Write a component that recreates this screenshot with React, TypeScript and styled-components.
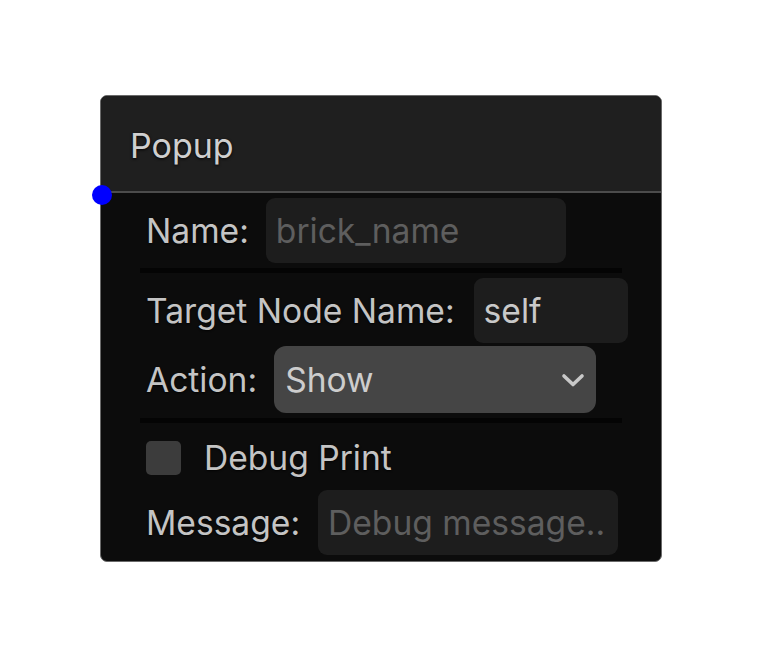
import React from "react";
import styled, { createGlobalStyle } from "styled-components";

const GlobalStyle = createGlobalStyle`
  html, body {
    margin: 0;
    padding: 0;
    background: #ffffff;
  }
  body {
    font-family: Inter, "Noto Sans", sans-serif;
  }
`;

const Stage = styled.div`
  width: 762px;
  height: 662px;
  padding: 95px 0 0 100px;
  box-sizing: border-box;
`;

const Anchor = styled.div`
  position: relative;
  width: 562px;
`;

const Node = styled.div`
  width: 562px;
  height: 467px;
  box-sizing: border-box;
  border: 1px solid #6a6a6a;
  border-radius: 7px;
  background: #0c0c0c;
  display: flex;
  flex-direction: column;
  overflow: hidden;
`;

const Titlebar = styled.div`
  height: 97px;
  flex: none;
  box-sizing: border-box;
  background: #1f1f1f;
  border-bottom: 2px solid #4c4c4c;
  display: flex;
  align-items: center;
  padding: 4px 0 0 29px;
  font-size: 34px;
  color: #cfcfcf;
  text-shadow: 0 1px 3px rgba(0, 0, 0, 0.9);
`;

const Body = styled.div`
  display: flex;
  flex-direction: column;
  padding: 4px 0 0 39px;
  width: 482px;
`;

const Row = styled.div<{ $gap?: number; $mt?: number }>`
  display: flex;
  align-items: center;
  gap: ${(p) => p.$gap ?? 17}px;
  margin-top: ${(p) => p.$mt ?? 0}px;
  padding-left: 6px;
`;

const Label = styled.span`
  font-size: 33.6px;
  line-height: 41px;
  color: #c4c4c4;
  white-space: nowrap;
  text-shadow: 0 1px 2px rgba(0, 0, 0, 0.8);
`;

const Field = styled.div<{ $w: number; $placeholder?: boolean }>`
  width: ${(p) => p.$w}px;
  height: 65px;
  flex: none;
  box-sizing: border-box;
  background: #1d1d1d;
  border-radius: 9px;
  padding: 0 10px;
  display: flex;
  align-items: center;
  font-size: 33.6px;
  white-space: nowrap;
  overflow: hidden;
  color: ${(p) => (p.$placeholder ? "#5e5e5e" : "#c9c9c9")};
`;

const Select = styled.div`
  width: 322px;
  height: 67px;
  flex: none;
  box-sizing: border-box;
  background: #454545;
  border-radius: 12px;
  padding: 0 9px 0 11px;
  display: flex;
  align-items: center;
  justify-content: space-between;
  font-size: 33.6px;
  color: #cdcdcd;
`;

const Separator = styled.div<{ $mt: number }>`
  height: 5px;
  margin-top: ${(p) => p.$mt}px;
  background: #040404;
`;

const Box = styled.div`
  width: 35px;
  height: 34px;
  border-radius: 5px;
  background: #3c3c3c;
`;

const Port = styled.div`
  position: absolute;
  left: -8px;
  top: 90px;
  width: 20px;
  height: 20px;
  border-radius: 50%;
  background: #0000ff;
`;

const Chevron = () => (
  <svg width="28" height="28" viewBox="0 0 28 28" fill="none">
    <path
      d="M5 10 L14 18.5 L23 10"
      stroke="#c8c8c8"
      strokeWidth="3.6"
      strokeLinecap="round"
      strokeLinejoin="round"
    />
  </svg>
);

export default function App() {
  return (
    <>
      <GlobalStyle />
      <Stage>
        <Anchor>
          <Node>
            <Titlebar>Popup</Titlebar>
            <Body>
              <Row $mt={1}>
                <Label>Name:</Label>
                <Field $w={300} $placeholder>
                  brick_name
                </Field>
              </Row>
              <Separator $mt={5} />
              <Row $mt={5} $gap={19}>
                <Label>Target Node Name:</Label>
                <Field $w={154}>self</Field>
              </Row>
              <Row $mt={3}>
                <Label>Action:</Label>
                <Select>
                  <span>Show</span>
                  <Chevron />
                </Select>
              </Row>
              <Separator $mt={5} />
              <Row $mt={14} $gap={23}>
                <Box />
                <Label>Debug Print</Label>
              </Row>
              <Row $mt={12} $gap={18}>
                <Label>Message:</Label>
                <Field $w={300} $placeholder>
                  Debug message..
                </Field>
              </Row>
            </Body>
          </Node>
          <Port />
        </Anchor>
      </Stage>
    </>
  );
}
